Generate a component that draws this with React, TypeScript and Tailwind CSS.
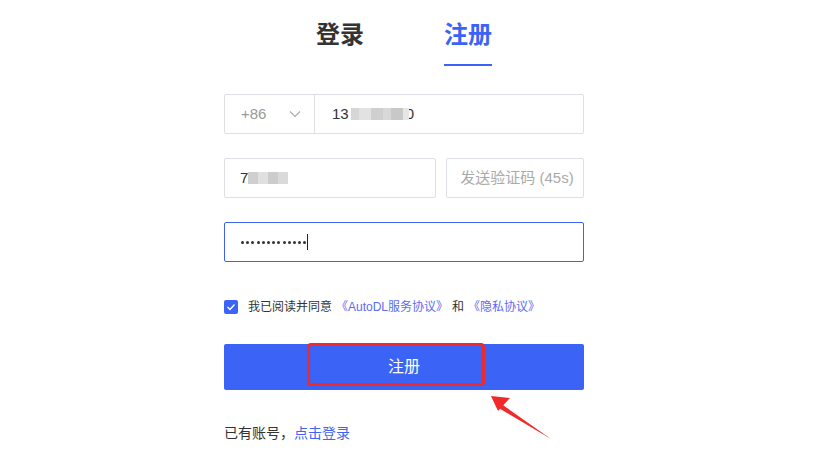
import React from "react";

const font = { fontFamily: '"Liberation Sans", "Noto Sans CJK SC", sans-serif' };

export default function App() {
  const dots = Array.from({ length: 13 });
  return (
    <div className="w-[829px] h-[459px] bg-white relative overflow-hidden" style={font}>
      <div className="absolute left-[224px] top-0 w-[360px] flex flex-col">
        <div className="flex justify-center gap-20 pt-[20px]">
          <div className="w-12 text-[24px] leading-[30px] font-bold text-[#333]">登录</div>
          <div className="w-12 flex flex-col items-center">
            <div className="text-[24px] leading-[30px] font-bold text-[#3b63f5]">注册</div>
            <div className="mt-[14px] w-12 h-[2px] bg-[#3b63f5]" />
          </div>
        </div>

        <div className="mt-[28px] h-10 border border-[#dcdfe6] rounded-[2px] flex items-stretch">
          <div className="w-[90px] border-r border-[#dcdfe6] flex items-center justify-between pl-[16px] pr-[13px]">
            <span className="text-[15px] text-[#999]">+86</span>
            <svg width="12" height="8" viewBox="0 0 12 8" fill="none">
              <path d="M1 1.5 L6 6.5 L11 1.5" stroke="#aaa" strokeWidth="1.1" />
            </svg>
          </div>
          <div className="flex items-center pl-[17px] text-[15px] text-[#333]">
            <span>13</span>
            <span className="ml-[2px] flex h-[12px] blur-[0.6px]">
              <span className="w-[8px] bg-[#d6d6d6]" />
              <span className="w-[12px] bg-[#e2e2e2]" />
              <span className="w-[12px] bg-[#cfcfcf]" />
              <span className="w-[8px] bg-[#d8d8d8]" />
              <span className="w-[12px] bg-[#c8c8c8]" />
              <span className="w-[6px] bg-[#e6e6e6]" />
            </span>
            <span className="-ml-[3px]">0</span>
          </div>
        </div>

        <div className="mt-[24px] flex gap-[10px]">
          <div className="w-[212px] h-10 border border-[#dcdfe6] rounded-[2px] flex items-center pl-[15px] text-[15px] text-[#333]">
            <span>7</span>
            <span className="flex h-[12px] blur-[0.6px]">
              <span className="w-[10px] bg-[#cfcfcf]" />
              <span className="w-[10px] bg-[#e0e0e0]" />
              <span className="w-[10px] bg-[#cccccc]" />
              <span className="w-[10px] bg-[#dadada]" />
            </span>
          </div>
          <div className="flex-1 h-10 border border-[#dcdfe6] rounded-[2px] flex items-center justify-center pl-[4px] text-[15px] text-[#aaa]">
            发送验证码 (45s)
          </div>
        </div>

        <div className="mt-[24px] h-10 border border-[#3b63f5] rounded-[2px] flex items-center pl-[16px]">
          <div className="flex gap-[2.2px] items-center">
            {dots.map((_, i) => (
              <span key={i} className="w-[3px] h-[3px] rounded-full bg-[#333]" />
            ))}
          </div>
          <span className="ml-[1px] w-[1px] h-[16px] bg-[#222]" />
        </div>

        <div className="mt-[36px] flex items-center">
          <div className="w-[14px] h-[14px] rounded-[2px] bg-[#3b63f5] flex items-center justify-center">
            <svg width="10" height="8" viewBox="0 0 10 8" fill="none">
              <path d="M1.5 4 L4 6.5 L8.5 1.5" stroke="white" strokeWidth="1.4" />
            </svg>
          </div>
          <span className="ml-[10px] text-[12px] text-[#333]">我已阅读并同意</span>
          <span className="ml-[4px] text-[12px] text-[#5b6cf0]">《AutoDL服务协议》</span>
          <span className="ml-[4px] text-[12px] text-[#333]">和</span>
          <span className="ml-[4px] text-[12px] text-[#5b6cf0]">《隐私协议》</span>
        </div>

        <div className="mt-[28px] relative h-[46px] rounded-[2px] bg-[#3b63f5] flex items-center justify-center text-white text-[16px]">
          注册
          <div className="absolute left-[83px] top-[-1px] w-[178px] h-[43px] border-[3px] border-[#f02a2a] rounded-[4px]" />
        </div>

        <div className="mt-[33px] text-[14px] text-[#333]">
          已有账号，<span className="text-[#3b63f5]">点击登录</span>
        </div>
      </div>

      <svg className="absolute left-0 top-0" width="829" height="459" viewBox="0 0 829 459">
        <path d="M551 439 L500 403 L497 407 Z" fill="#f02a2a" />
        <path d="M491 396 L510 398 L498 411 Z" fill="#f02a2a" />
      </svg>
    </div>
  );
}
